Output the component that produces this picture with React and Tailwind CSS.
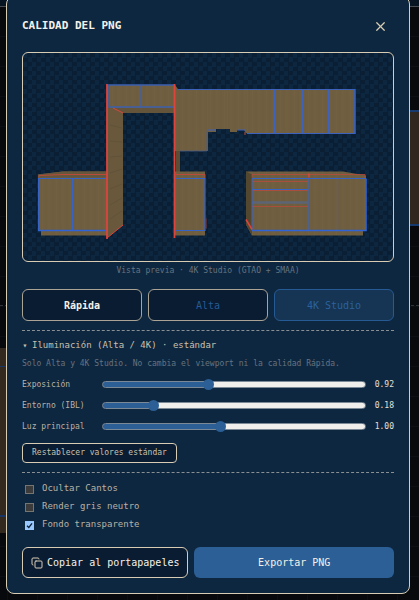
import { useState } from "react";
import { LuCopy, LuX } from "react-icons/lu";

const qualities = [
  { id: "rapida", label: "Rápida", className: "border-[#aba495] bg-[#0a1c31] text-[#f4f1ea]" },
  { id: "alta", label: "Alta", className: "border-[#aba495] bg-[#0a1c31] text-[#265a94]" },
  { id: "4k", label: "4K Studio", className: "border-[#265a94] bg-[#163453] text-[#2b629e]" },
];

const sliders = [
  { id: "exposicion", label: "Exposición", min: 0.2, max: 2, value: 0.92 },
  { id: "entorno", label: "Entorno (IBL)", min: 0, max: 1, value: 0.18 },
  { id: "luz", label: "Luz principal", min: 0.2, max: 2, value: 1 },
];

const options = [
  { id: "cantos", label: "Ocultar Cantos", checked: false },
  { id: "gris", label: "Render gris neutro", checked: false },
  { id: "fondo", label: "Fondo transparente", checked: true },
];

// Escena que queda detrás del diálogo
const Backdrop = () => (
  <div className="absolute inset-0 overflow-hidden bg-[#07090c] bg-[linear-gradient(#0c0f15_1px,transparent_1px),linear-gradient(90deg,#0c0f15_1px,transparent_1px)] bg-[size:30px_30px] bg-[position:7px_6px]">
    <div className="absolute inset-x-0 top-0 h-[7px] border-b border-[#4a4d52] bg-[#071422]" />
    <div className="absolute inset-x-0 top-[305px] border-t border-dashed border-[#30343a]" />
    <div className="absolute left-0 top-[348px] h-[185px] w-8 bg-[#33291f]">
      <div className="mt-[18px] border-t border-[#173566]" />
      <div className="mt-[148px] border-t-2 border-[#173566]" />
    </div>
    <div className="absolute right-0 top-[110px] h-[116px] w-8 border-y-2 border-[#173a6e] bg-[#30281e]" />
  </div>
);

// Vista previa de la cocina
const Kitchen = () => (
  <svg viewBox="0 0 370 208" className="block w-full" role="img" aria-label="Vista previa">
    <defs>
      <pattern id="wood" width="14" height="60" patternUnits="userSpaceOnUse">
        <rect width="14" height="60" fill="#6f5e40" />
        <path d="M2 0v60M9 0v60" stroke="#6c5b3e" strokeWidth="1" />
        <path d="M5.500 0v60M12 0v60" stroke="#716041" strokeWidth="1" />
      </pattern>
    </defs>

    {/* Muebles altos */}
    <path d="M152 32L155 36H332V80H223L221 77H214V79H207V76H193V79H185V98H152Z" fill="url(#wood)" />
    <path d="M153 98H157V121H153Z" fill="#5c4e36" />
    <path d="M155 36.500H332M184.500 36V78M204.500 36V76M224.500 36V80M251.500 36V80M279.500 36V80M305.500 36V80M224 80.500H332M184 77H193M214 77H223" stroke="#3d63bd" fill="none" />
    <path d="M332 36V81" stroke="#2f63d6" strokeWidth="1.500" />
    <path d="M157 98H184V78" stroke="#4b5d83" strokeWidth=".8" fill="none" />
    <path d="M222 79V82" stroke="#b84a3c" />

    {/* Torre */}
    <path d="M84 32H151V60H84Z" fill="url(#wood)" />
    <path d="M90 55H151V60H100Z" fill="#63543a" />
    <path d="M85 32H151M86 32V54H151M118 32V54" stroke="#3d60b0" strokeWidth="1.300" fill="none" />

    {/* Muebles bajos de la izquierda */}
    <g transform="translate(0 -2.500)">
      <path d="M15 124L40 121H84V185H18V180H15Z" fill="url(#wood)" />
      <path d="M15 124L40 121H84V127H15Z" fill="#66563b" />
      <path d="M16 127V125L40 124H84" stroke="#b84a3c" fill="none" />
      <path d="M15 128H84M15.500 128V180M49.500 128V180" stroke="#3563c6" strokeWidth="1.200" fill="none" />
      <path d="M15 180H84" stroke="#2f63d6" strokeWidth="1.500" />
    </g>

    {/* Panel lateral de la torre */}
    <path d="M84 55H90L100 60V172L84 185Z" fill="#69583c" />
    <path d="M87 72l12 3M87 88l12 1M87 104l12-1M87 120l12-4M87 136l12-5M87 152l12-7M87 166l12-8" stroke="#5f5037" strokeWidth=".8" />
    <path d="M84 31V186" stroke="#dc443c" strokeWidth="1.800" />
    <path d="M84 185L100 172M90 55L100 60" stroke="#dc443c" fill="none" />

    {/* Mueble bajo central */}
    <g transform="translate(0 -2.500)">
      <path d="M152 121H182V185H152Z" fill="url(#wood)" />
      <path d="M153 124H182V128" stroke="#b84a3c" fill="none" />
      <path d="M153 128H182V180H153" stroke="#3563c6" strokeWidth="1.200" fill="none" />
      <path d="M183 168V178" stroke="#8b3a3c" />
    </g>
    <path d="M151.500 31V185" stroke="#dc443c" strokeWidth="1.800" />

    {/* Cajonera y muebles de la derecha */}
    <g transform="translate(0 -2.500)">
      <path d="M223 121H320L343 125V180H340V185H229L223 174Z" fill="url(#wood)" />
      <path d="M223 121L229 124V185L223 174Z" fill="#534730" />
      <path d="M229 127V124H342V127M229 140H285M229 131H285M229 156H285" stroke="#b84a3c" strokeWidth=".8" fill="none" />
      <path d="M229 152H285" stroke="#5c6475" strokeWidth="2.500" />
      <path d="M229 128H343M229 128V180M229 139H285M286 128V180M314.500 128V180" stroke="#3563c6" strokeWidth="1.100" fill="none" />
      <path d="M229 180H343V128" stroke="#2f63d6" strokeWidth="1.600" fill="none" />
      <path d="M223 169L229 179M286 123V127" stroke="#dc443c" strokeWidth="1.500" />
    </g>
  </svg>
);

const Slider = ({ id, label, min, max, value: initial }) => {
  const [value, setValue] = useState(initial);
  const ratio = (value - min) / (max - min);

  return (
    <div className="flex h-[21px] items-center">
      <label htmlFor={id} className="w-20 shrink-0 text-[8px] text-[#b9b2a4]">
        {label}
      </label>
      <input
        id={id}
        type="range"
        min={min}
        max={max}
        step={0.01}
        value={value}
        onChange={(e) => setValue(Number(e.target.value))}
        className="h-[7px] min-w-0 flex-1 appearance-none rounded-full border border-[#7b8896] [&::-webkit-slider-thumb]:size-[11px] [&::-webkit-slider-thumb]:appearance-none [&::-webkit-slider-thumb]:rounded-full [&::-webkit-slider-thumb]:bg-[#2b5f95]"
        style={{
          background: `linear-gradient(to right, #2b5f95 ${ratio * 100}%, #f1efec ${ratio * 100}%)`,
        }}
      />
      <output htmlFor={id} className="w-7 shrink-0 text-right text-[8px] text-[#e6e1d7]">
        {value.toFixed(2)}
      </output>
    </div>
  );
};

const Option = ({ id, label, checked: initial }) => {
  const [checked, setChecked] = useState(initial);

  return (
    <label htmlFor={id} className="flex h-[18px] items-center gap-2 pl-[3px] text-[9px] text-[#b9b2a4]">
      <span className="relative flex size-[9px]">
        <input
          id={id}
          type="checkbox"
          checked={checked}
          onChange={(e) => setChecked(e.target.checked)}
          className="size-[9px] appearance-none border border-[#77756f] bg-[#3b3b3b] checked:border-[#99c8ff] checked:bg-[#99c8ff]"
        />
        {checked && (
          <svg viewBox="0 0 9 9" className="pointer-events-none absolute inset-0">
            <path d="M2 4.800L3.800 6.500L7 2.300" fill="none" stroke="#0d2137" strokeWidth="1.300" />
          </svg>
        )}
      </span>
      {label}
    </label>
  );
};

const App = () => {
  return (
    <div className="relative flex min-h-screen items-start justify-center overflow-hidden pr-[9px] pl-[6px] font-['DejaVu_Sans_Mono',monospace]">
      <Backdrop />

      <div
        role="dialog"
        aria-labelledby="titulo"
        className="relative -mt-1 w-full max-w-xl rounded-lg border border-[#d8ccb4] bg-[#0e2740] px-[15px] pb-[15px]"
      >
        {/* Título */}
        <div className="flex h-[55px] items-center justify-between pt-1">
          <h1 id="titulo" className="text-[11px] font-bold text-[#f4f1ea]">
            CALIDAD DEL PNG
          </h1>
          <button type="button" aria-label="Cerrar" className="flex size-7 items-center justify-center text-[#d8ccb4]">
            <LuX size={15} />
          </button>
        </div>

        {/* Vista previa con fondo a cuadros */}
        <div className="overflow-hidden rounded-md border border-[#d8ccb4] bg-[conic-gradient(#0a1f33_25%,#0d2741_0_50%,#0a1f33_0_75%,#0d2741_0)] bg-[size:9px_9px]">
          <Kitchen />
        </div>
        <p className="mt-[3px] text-center text-[8px] leading-3 text-[#67737f]">
          Vista previa · 4K Studio (GTAO + SMAA)
        </p>

        {/* Calidad */}
        <div className="mt-3 grid grid-cols-3 gap-[6px]">
          {qualities.map((q) => (
            <button
              key={q.id}
              type="button"
              className={`h-8 rounded-md border text-[10px] first:font-bold ${q.className}`}
            >
              {q.label}
            </button>
          ))}
        </div>

        {/* Iluminación */}
        <details open className="mt-[9px] border-t border-dashed border-[#8a8f92] pt-2">
          <summary className="flex h-[14px] list-none items-center gap-1 text-[9px] text-[#c9c0af]">
            <span className="w-[6px] text-center text-[8px]">▾</span>
            Iluminación (Alta / 4K) · estándar
          </summary>
          <p className="mt-1 mb-[3px] text-[8px] leading-[14px] text-[#67737f]">
            Solo Alta y 4K Studio. No cambia el viewport ni la calidad Rápida.
          </p>
          {sliders.map((s) => (
            <Slider key={s.id} {...s} />
          ))}
          <button
            type="button"
            className="mt-[6px] block h-5 rounded border border-[#d8ccb4] bg-[#0a1c31] px-[9px] text-[8px] text-[#c9c0af]"
          >
            Restablecer valores estándar
          </button>
        </details>

        {/* Opciones */}
        <div className="mt-[9px] border-t border-dashed border-[#8a8f92] pt-[7px]">
          {options.map((o) => (
            <Option key={o.id} {...o} />
          ))}
        </div>

        {/* Acciones */}
        <div className="mt-[13px] flex gap-[6px]">
          <button
            type="button"
            className="flex h-[31px] items-center gap-1 rounded-md border border-[#d8ccb4] bg-[#0a1c31] px-2 text-[10px] text-[#f4f1ea]"
          >
            <LuCopy size={12} className="text-[#d8ccb4]" />
            Copiar al portapapeles
          </button>
          <button type="button" className="h-[31px] flex-1 rounded-md bg-[#2b5f95] text-[10px] text-[#f4f1ea]">
            Exportar PNG
          </button>
        </div>
      </div>
    </div>
  );
};

export default App;
